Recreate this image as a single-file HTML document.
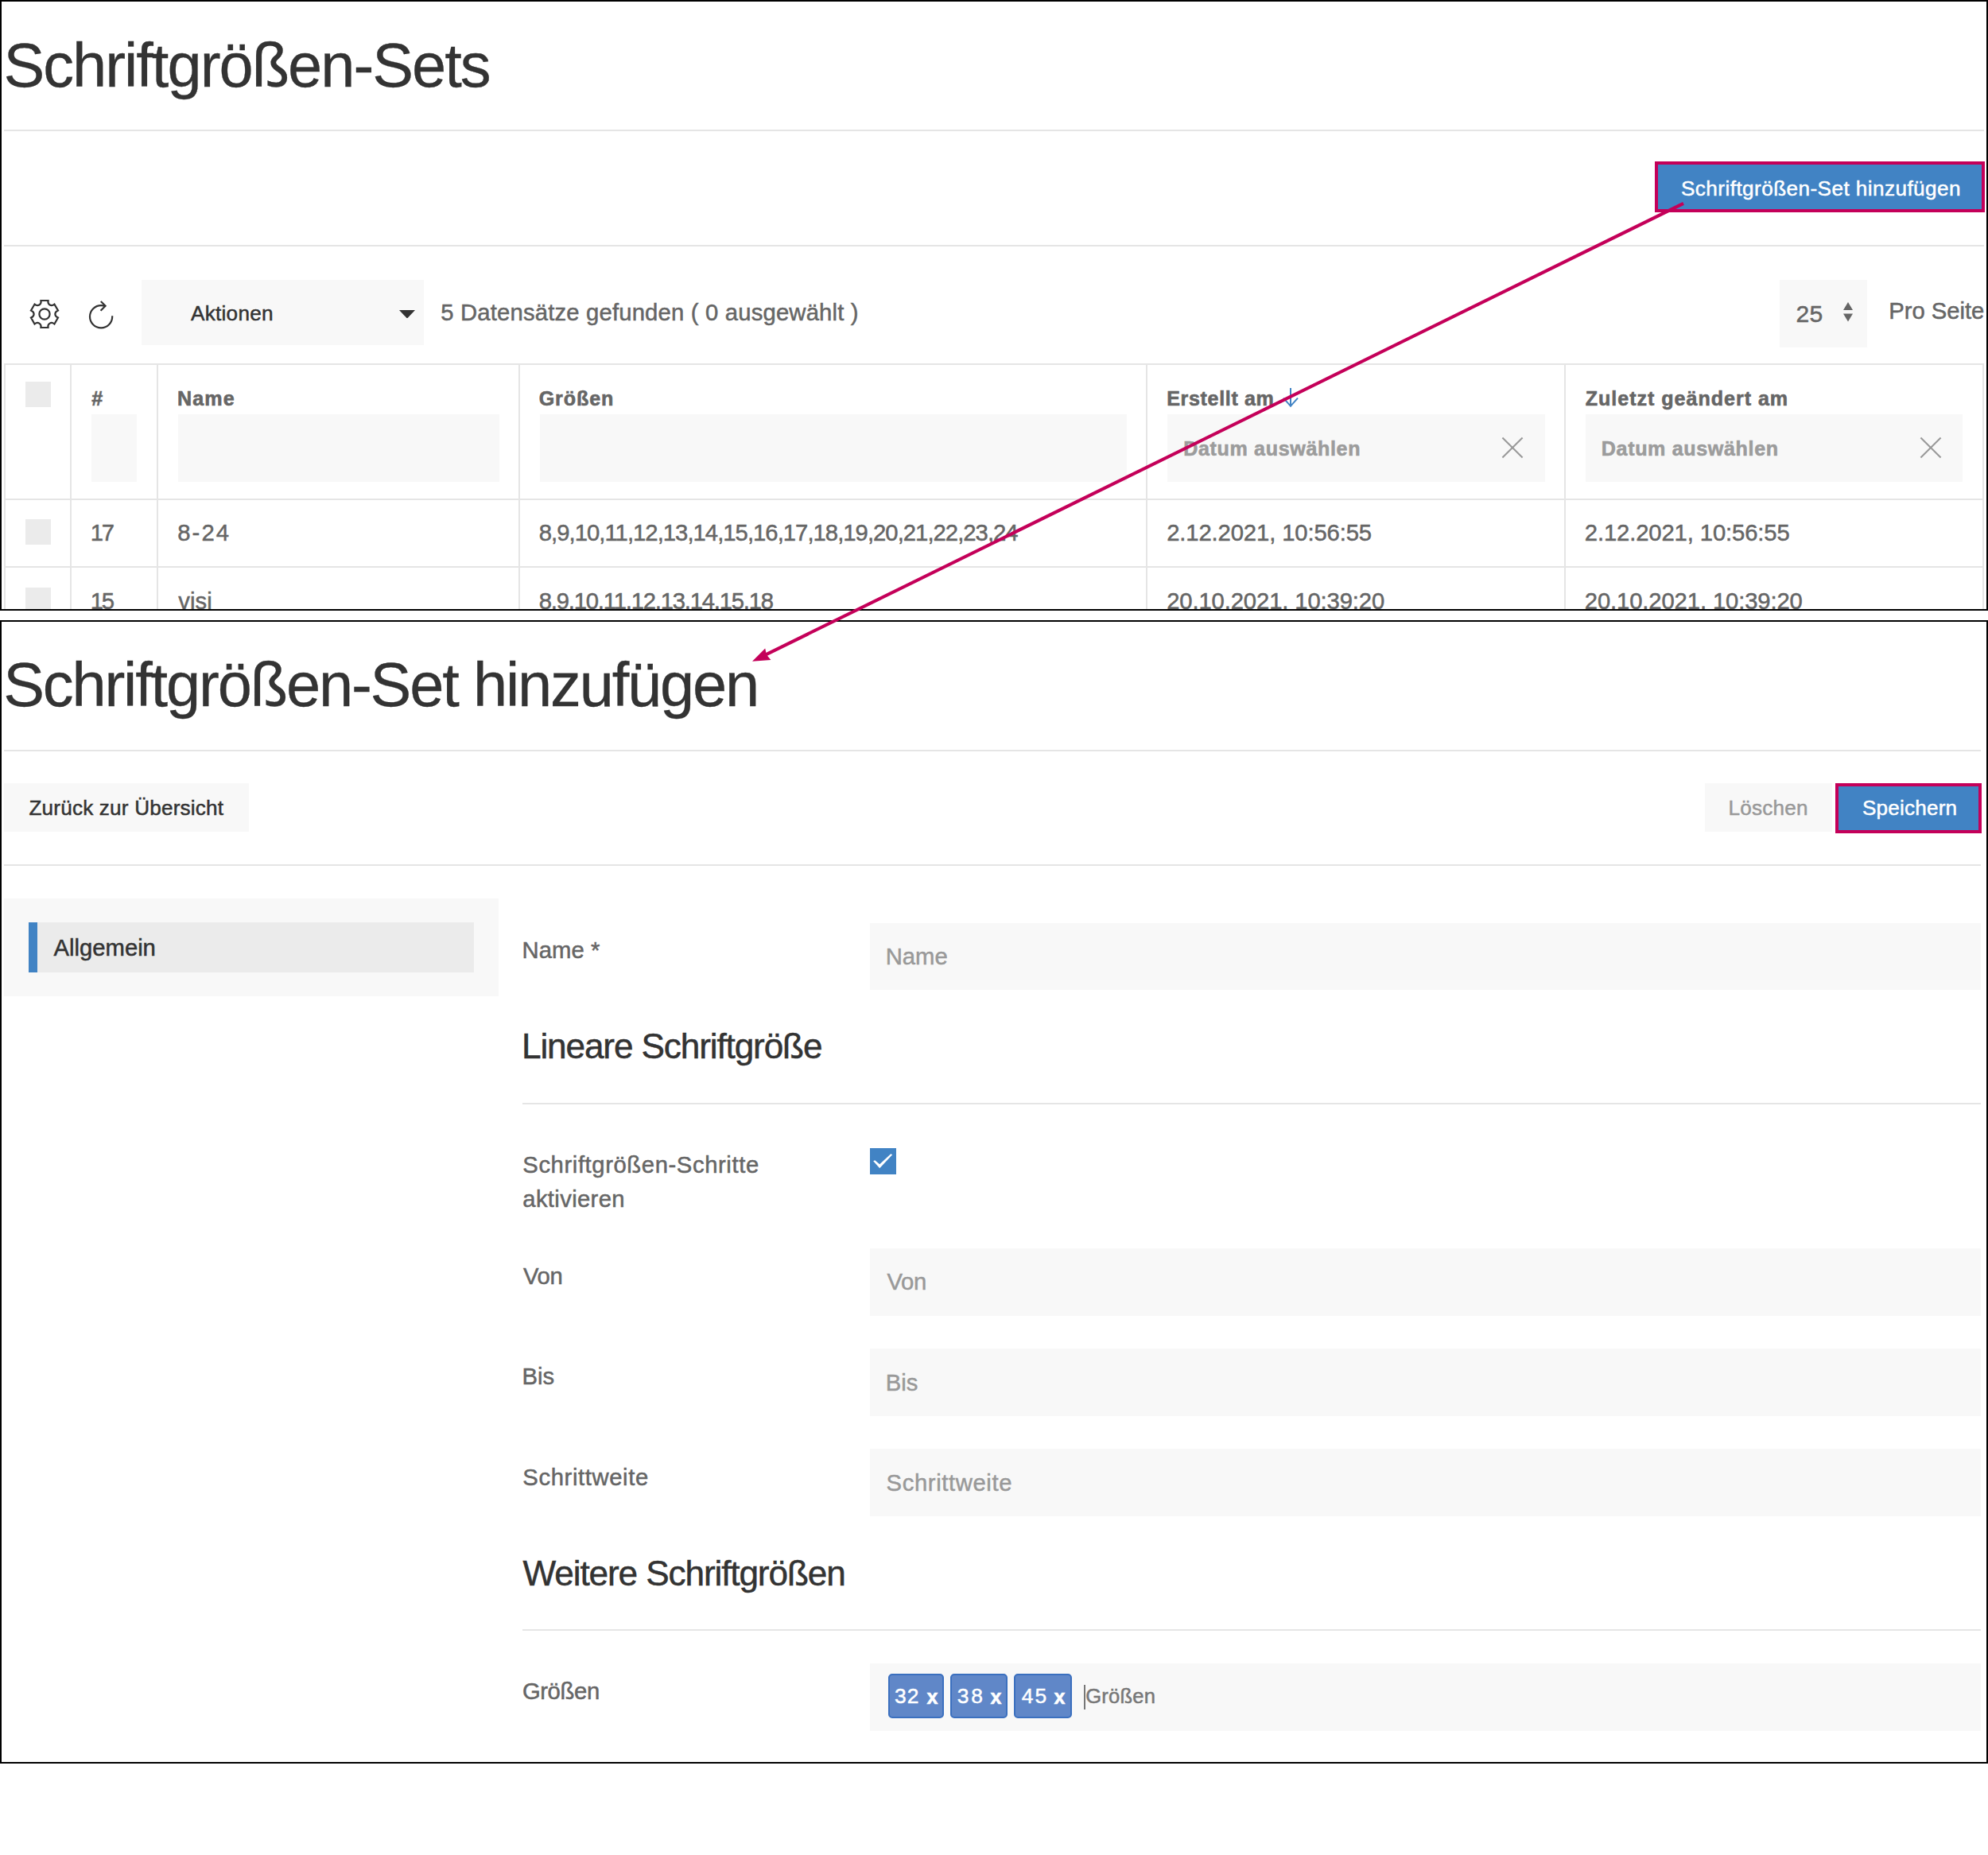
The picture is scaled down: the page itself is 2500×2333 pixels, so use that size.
<!DOCTYPE html>
<html lang="de"><head><meta charset="utf-8"><title>Schriftgrößen-Sets</title>
<style>
html,body{margin:0;padding:0;background:#fff}
body{width:2500px;height:2333px;position:relative;overflow:hidden;font-family:"Liberation Sans",sans-serif}
.frame{position:absolute;left:0;width:2500px;box-sizing:border-box;border:2px solid #000;overflow:hidden;background:#fff}
.inner{position:absolute;left:-2px;width:2500px}
.b{position:absolute;display:block}
.t{position:absolute;white-space:pre;line-height:1;-webkit-text-stroke:0.3px currentColor}
.tag{box-sizing:border-box;background:#6087c8;border:2px solid #3b70bf;border-radius:5px}
</style></head><body>
<section class="frame" style="top:0;height:768px"><div class="inner" style="top:-2px">
<div class="b" style="left:5px;top:163px;width:2490px;height:2px;background:#e5e5e5;"></div>
<div class="b" style="left:5px;top:307.5px;width:2490px;height:2px;background:#e5e5e5;"></div>
<div class="b" style="left:2081px;top:203px;width:415px;height:64px;background:#4183c4;box-sizing:border-box;border:4px solid #c40059;"></div>
<div class="b" style="left:178px;top:352px;width:355px;height:81.5px;background:#f8f8f8;"></div>
<div class="b" style="left:2238px;top:351.5px;width:110px;height:85px;background:#f8f8f8;"></div>
<div class="b" style="left:5.3px;top:457.3px;width:2px;height:320px;background:#e5e5e5;"></div>
<div class="b" style="left:88.4px;top:457.3px;width:2px;height:320px;background:#e5e5e5;"></div>
<div class="b" style="left:196.5px;top:457.3px;width:2px;height:320px;background:#e5e5e5;"></div>
<div class="b" style="left:652.2px;top:457.3px;width:2px;height:320px;background:#e5e5e5;"></div>
<div class="b" style="left:1441.4px;top:457.3px;width:2px;height:320px;background:#e5e5e5;"></div>
<div class="b" style="left:1967.3px;top:457.3px;width:2px;height:320px;background:#e5e5e5;"></div>
<div class="b" style="left:2493px;top:457.3px;width:2px;height:320px;background:#e5e5e5;"></div>
<div class="b" style="left:5.3px;top:457.3px;width:2489.7px;height:2px;background:#e5e5e5;"></div>
<div class="b" style="left:5.3px;top:626.5px;width:2489.7px;height:2px;background:#e5e5e5;"></div>
<div class="b" style="left:5.3px;top:711.7px;width:2489.7px;height:2px;background:#e5e5e5;"></div>
<div class="b" style="left:32px;top:480px;width:32px;height:32px;background:#ebebeb;"></div>
<div class="b" style="left:32px;top:653.2px;width:32px;height:32px;background:#ebebeb;"></div>
<div class="b" style="left:32px;top:738.6px;width:32px;height:32px;background:#ebebeb;"></div>
<div class="b" style="left:115.3px;top:520.5px;width:56.7px;height:85px;background:#f8f8f8;"></div>
<div class="b" style="left:223.5px;top:520.5px;width:404.1px;height:85px;background:#f8f8f8;"></div>
<div class="b" style="left:678.8px;top:520.5px;width:738.2px;height:85px;background:#f8f8f8;"></div>
<div class="b" style="left:1468.2px;top:520.5px;width:474.5px;height:85px;background:#f8f8f8;"></div>
<div class="b" style="left:1993.8px;top:520.5px;width:474.5px;height:85px;background:#f8f8f8;"></div>
<svg class="b" style="left:36px;top:375.3px" width="40" height="40" viewBox="0 0 20 20"><circle fill="none" stroke="#333" stroke-width="1.1" cx="9.997" cy="10" r="3.31"/><path fill="none" stroke="#333" stroke-width="1.1" d="M18.488,12.285 L16.205,16.237 C15.322,15.496 14.185,15.281 13.303,15.791 C12.428,16.289 12.047,17.373 12.246,18.5 L7.735,18.5 C7.938,17.374 7.553,16.299 6.684,15.791 C5.801,15.27 4.655,15.492 3.773,16.237 L1.5,12.285 C2.573,11.871 3.317,10.999 3.317,9.991 C3.305,8.98 2.573,8.121 1.5,7.716 L3.765,3.784 C4.645,4.516 5.794,4.738 6.687,4.232 C7.555,3.722 7.939,2.637 7.735,1.5 L12.263,1.5 C12.072,2.637 12.441,3.71 13.314,4.22 C14.206,4.73 15.343,4.516 16.225,3.794 L18.487,7.714 C17.404,8.117 16.661,8.988 16.67,10.009 C16.672,11.018 17.415,11.88 18.488,12.285 L18.488,12.285 Z"/></svg>
<svg class="b" style="left:107.4px;top:374.6px" width="40" height="40" viewBox="0 0 20 20"><path fill="none" stroke="#333" stroke-width="1.1" d="M17.08,11.15 C17.09,11.31 17.1,11.47 17.1,11.64 C17.1,15.53 13.94,18.69 10.05,18.69 C6.16,18.69 3,15.53 3,11.64 C3,7.75 6.16,4.59 10.05,4.59 C10.9,4.59 11.71,4.73 12.46,5.01"/><polyline fill="none" stroke="#333" stroke-width="1.1" points="9.9 2 12.79 4.89 9.79 7.9"/></svg>
<svg class="b" style="left:1881px;top:542.3px" width="42" height="42" viewBox="0 0 20 20"><path fill="none" stroke="#999" stroke-width="0.98" d="M16,16 L4,4"/><path fill="none" stroke="#999" stroke-width="0.98" d="M16,4 L4,16"/></svg>
<svg class="b" style="left:2406.6px;top:542.3px" width="42" height="42" viewBox="0 0 20 20"><path fill="none" stroke="#999" stroke-width="0.98" d="M16,16 L4,4"/><path fill="none" stroke="#999" stroke-width="0.98" d="M16,4 L4,16"/></svg>
<svg class="b" style="left:1601.9px;top:479.7px" width="40" height="40" viewBox="0 0 20 20"><polygon fill="#4183c4" points="10.5,16.08 5.63,10.66 6.37,10 10.5,14.58 14.63,10 15.37,10.66"/><line fill="none" stroke="#4183c4" x1="10.5" y1="4" x2="10.5" y2="15"/></svg>
<svg class="b" style="left:502px;top:389.6px" width="20" height="10.6" viewBox="0 0 20 11" preserveAspectRatio="none"><polygon fill="#333" points="0,0 20,0 10,11"/></svg>
<svg class="b" style="left:2317.8px;top:380px" width="12" height="25" viewBox="0 0 13 25" preserveAspectRatio="none"><polygon fill="#666" points="0,10 13,10 6.5,0"/><polygon fill="#666" points="0,14.5 13,14.5 6.5,24.5"/></svg>
<span class="t" style="left:4.4px;top:43.5px;font-size:77.64px;letter-spacing:-1.99px;color:#333;">Schriftgrößen-Sets</span>
<span class="t" style="left:2114.0px;top:224.2px;font-size:26.12px;letter-spacing:0.44px;color:#fff;-webkit-text-stroke-width:0.5px;">Schriftgrößen-Set hinzufügen</span>
<span class="t" style="left:240.0px;top:381.0px;font-size:26.12px;letter-spacing:0.27px;color:#333;-webkit-text-stroke-width:0.5px;">Aktionen</span>
<span class="t" style="left:554.2px;top:379.4px;font-size:29.26px;letter-spacing:0.18px;color:#666;-webkit-text-stroke-width:0.5px;">5 Datensätze gefunden ( 0 ausgewählt )</span>
<span class="t" style="left:2258.5px;top:379.5px;font-size:30.1px;letter-spacing:0.26px;color:#666;-webkit-text-stroke-width:0.5px;">25</span>
<span class="t" style="left:2375.3px;top:377.1px;font-size:29.26px;letter-spacing:-0.04px;color:#666;-webkit-text-stroke-width:0.5px;">Pro Seite</span>
<span class="t" style="left:115.3px;top:488.9px;font-size:25.08px;letter-spacing:1.7px;color:#666;font-weight:700;-webkit-text-stroke-width:0.6px;">#</span>
<span class="t" style="left:223.0px;top:488.9px;font-size:25.08px;letter-spacing:1.15px;color:#666;font-weight:700;-webkit-text-stroke-width:0.6px;">Name</span>
<span class="t" style="left:677.7px;top:488.9px;font-size:25.08px;letter-spacing:0.89px;color:#666;font-weight:700;-webkit-text-stroke-width:0.6px;">Größen</span>
<span class="t" style="left:1467.2px;top:488.9px;font-size:25.08px;letter-spacing:0.65px;color:#666;font-weight:700;-webkit-text-stroke-width:0.6px;">Erstellt am</span>
<span class="t" style="left:1993.8px;top:488.9px;font-size:25.08px;letter-spacing:0.97px;color:#666;font-weight:700;-webkit-text-stroke-width:0.6px;">Zuletzt geändert am</span>
<span class="t" style="left:1488.2px;top:552.0px;font-size:25.08px;letter-spacing:0.65px;color:#9c9c9c;font-weight:700;-webkit-text-stroke-width:0.6px;">Datum auswählen</span>
<span class="t" style="left:2013.8px;top:552.0px;font-size:25.08px;letter-spacing:0.65px;color:#9c9c9c;font-weight:700;-webkit-text-stroke-width:0.6px;">Datum auswählen</span>
<span class="t" style="left:113.7px;top:656.4px;font-size:29.26px;letter-spacing:-2.27px;color:#666;-webkit-text-stroke-width:0.5px;">17</span>
<span class="t" style="left:223.3px;top:656.4px;font-size:29.26px;letter-spacing:2.04px;color:#666;-webkit-text-stroke-width:0.5px;">8-24</span>
<span class="t" style="left:677.8px;top:656.4px;font-size:29.26px;letter-spacing:-0.97px;color:#666;-webkit-text-stroke-width:0.5px;">8,9,10,11,12,13,14,15,16,17,18,19,20,21,22,23,24</span>
<span class="t" style="left:1467.2px;top:656.4px;font-size:29.26px;letter-spacing:-0.13px;color:#666;-webkit-text-stroke-width:0.5px;">2.12.2021, 10:56:55</span>
<span class="t" style="left:1992.8px;top:656.4px;font-size:29.26px;letter-spacing:-0.13px;color:#666;-webkit-text-stroke-width:0.5px;">2.12.2021, 10:56:55</span>
<span class="t" style="left:113.7px;top:742.4px;font-size:29.26px;letter-spacing:-2.27px;color:#666;-webkit-text-stroke-width:0.5px;">15</span>
<span class="t" style="left:224.3px;top:742.4px;font-size:29.26px;letter-spacing:0.08px;color:#666;-webkit-text-stroke-width:0.5px;">visi</span>
<span class="t" style="left:677.8px;top:742.4px;font-size:29.26px;letter-spacing:-1.21px;color:#666;-webkit-text-stroke-width:0.5px;">8,9,10,11,12,13,14,15,18</span>
<span class="t" style="left:1467.2px;top:742.4px;font-size:29.26px;letter-spacing:-0.13px;color:#666;-webkit-text-stroke-width:0.5px;">20.10.2021, 10:39:20</span>
<span class="t" style="left:1992.8px;top:742.4px;font-size:29.26px;letter-spacing:-0.13px;color:#666;-webkit-text-stroke-width:0.5px;">20.10.2021, 10:39:20</span>
</div></section>
<section class="frame" style="top:780px;height:1438px"><div class="inner" style="top:-782px">
<div class="b" style="left:5px;top:942.5px;width:2486px;height:2px;background:#e5e5e5;"></div>
<div class="b" style="left:5px;top:1087px;width:2486px;height:2px;background:#e5e5e5;"></div>
<div class="b" style="left:5px;top:985.3px;width:308px;height:60.3px;background:#f8f8f8;"></div>
<div class="b" style="left:2144px;top:985.3px;width:160px;height:60.3px;background:#f8f8f8;"></div>
<div class="b" style="left:2308px;top:985.3px;width:184px;height:62.3px;background:#4183c4;box-sizing:border-box;border:4px solid #c40059;"></div>
<div class="b" style="left:5px;top:1130px;width:622px;height:123px;background:#f8f8f8;"></div>
<div class="b" style="left:35.6px;top:1160px;width:560.2px;height:63px;background:#ebebeb;box-sizing:border-box;border-left:11px solid #4183c4;"></div>
<div class="b" style="left:1094px;top:1160.5px;width:1397px;height:84.7px;background:#f8f8f8;"></div>
<div class="b" style="left:1094px;top:1570px;width:1397px;height:84.7px;background:#f8f8f8;"></div>
<div class="b" style="left:1094px;top:1696.3px;width:1397px;height:84.7px;background:#f8f8f8;"></div>
<div class="b" style="left:1094px;top:1822px;width:1397px;height:84.7px;background:#f8f8f8;"></div>
<div class="b" style="left:1094px;top:2092.3px;width:1397px;height:84.5px;background:#f8f8f8;"></div>
<div class="b" style="left:657px;top:1387.2px;width:1834px;height:2px;background:#e5e5e5;"></div>
<div class="b" style="left:657px;top:2049px;width:1834px;height:2px;background:#e5e5e5;"></div>
<div class="b" style="left:1094px;top:1444px;width:32.5px;height:32.5px;background:#4183c4;"></div>
<svg class="b" style="left:1094px;top:1444px" width="32.5" height="32.5" viewBox="0 0 32.5 32.5"><polygon fill="#fff" points="26.2,7.2 12.2,20.2 6.2,15.2 4.2,16.2 12.2,25.2 28.2,8.2"/></svg>
<div class="b tag" style="left:1116.8px;top:2105.2px;width:70px;height:55.6px"></div>
<div class="b tag" style="left:1195.1px;top:2105.2px;width:72px;height:55.6px"></div>
<div class="b tag" style="left:1275.2px;top:2105.2px;width:72.4px;height:55.6px"></div>
<div class="b" style="left:1363px;top:2119px;width:1.5px;height:30.5px;background:#777;"></div>
<span class="t" style="left:4.2px;top:823.2px;font-size:77.64px;letter-spacing:-2.17px;color:#333;">Schriftgrößen-Set hinzufügen</span>
<span class="t" style="left:36.4px;top:1002.5px;font-size:26.12px;letter-spacing:0.2px;color:#333;-webkit-text-stroke-width:0.5px;">Zurück zur Übersicht</span>
<span class="t" style="left:2173.5px;top:1002.7px;font-size:26.12px;letter-spacing:0.22px;color:#999;-webkit-text-stroke-width:0.5px;">Löschen</span>
<span class="t" style="left:2341.9px;top:1002.7px;font-size:26.12px;letter-spacing:0.21px;color:#fff;-webkit-text-stroke-width:0.5px;">Speichern</span>
<span class="t" style="left:67.6px;top:1178.1px;font-size:29.26px;letter-spacing:-0.02px;color:#333;-webkit-text-stroke-width:0.5px;">Allgemein</span>
<span class="t" style="left:656.5px;top:1180.8px;font-size:29.26px;letter-spacing:0.07px;color:#666;-webkit-text-stroke-width:0.5px;">Name *</span>
<span class="t" style="left:1113.8px;top:1189.0px;font-size:29.26px;letter-spacing:-0.05px;color:#999;-webkit-text-stroke-width:0.5px;">Name</span>
<span class="t" style="left:656.0px;top:1294.2px;font-size:44.2px;letter-spacing:-1.15px;color:#333;-webkit-text-stroke-width:0.5px;">Lineare Schriftgröße</span>
<span class="t" style="left:657.3px;top:1450.9px;font-size:29.26px;letter-spacing:0.59px;color:#666;-webkit-text-stroke-width:0.5px;">Schriftgrößen-Schritte</span>
<span class="t" style="left:657.3px;top:1493.9px;font-size:29.26px;letter-spacing:0.34px;color:#666;-webkit-text-stroke-width:0.5px;">aktivieren</span>
<span class="t" style="left:658.0px;top:1590.7px;font-size:29.26px;letter-spacing:-0.28px;color:#666;-webkit-text-stroke-width:0.5px;">Von</span>
<span class="t" style="left:1115.4px;top:1598.4px;font-size:29.26px;letter-spacing:-0.28px;color:#999;-webkit-text-stroke-width:0.5px;">Von</span>
<span class="t" style="left:656.5px;top:1717.1px;font-size:29.26px;letter-spacing:-0.0px;color:#666;-webkit-text-stroke-width:0.5px;">Bis</span>
<span class="t" style="left:1113.8px;top:1724.6px;font-size:29.26px;letter-spacing:-0.0px;color:#999;-webkit-text-stroke-width:0.5px;">Bis</span>
<span class="t" style="left:657.3px;top:1843.6px;font-size:29.26px;letter-spacing:0.61px;color:#666;-webkit-text-stroke-width:0.5px;">Schrittweite</span>
<span class="t" style="left:1114.6px;top:1850.7px;font-size:29.26px;letter-spacing:0.61px;color:#999;-webkit-text-stroke-width:0.5px;">Schrittweite</span>
<span class="t" style="left:657.6px;top:1956.5px;font-size:44.2px;letter-spacing:-1.14px;color:#333;-webkit-text-stroke-width:0.5px;">Weitere Schriftgrößen</span>
<span class="t" style="left:656.9px;top:2113.2px;font-size:29.26px;letter-spacing:-0.38px;color:#666;-webkit-text-stroke-width:0.5px;">Größen</span>
<span class="t" style="left:1365.2px;top:2121.4px;font-size:25.6px;letter-spacing:0.19px;color:#777;-webkit-text-stroke-width:0.5px;">Größen</span>
<span class="t" style="left:1124.9px;top:2120.4px;font-size:26.4px;letter-spacing:1.22px;color:#fff;-webkit-text-stroke-width:0.5px;">32</span>
<span class="t" style="left:1165.5px;top:2121.5px;font-size:25.08px;letter-spacing:-0.9px;color:#fff;font-weight:700;-webkit-text-stroke-width:0.6px;">x</span>
<span class="t" style="left:1203.7px;top:2120.4px;font-size:26.4px;letter-spacing:2.92px;color:#fff;-webkit-text-stroke-width:0.5px;">38</span>
<span class="t" style="left:1245.4px;top:2121.5px;font-size:25.08px;letter-spacing:-0.7px;color:#fff;font-weight:700;-webkit-text-stroke-width:0.6px;">x</span>
<span class="t" style="left:1284.8px;top:2120.4px;font-size:26.4px;letter-spacing:1.92px;color:#fff;-webkit-text-stroke-width:0.5px;">45</span>
<span class="t" style="left:1325.5px;top:2121.5px;font-size:25.08px;letter-spacing:-1.0px;color:#fff;font-weight:700;-webkit-text-stroke-width:0.6px;">x</span>
</div></section>
<svg class="b" style="left:0;top:0;z-index:5" width="2500" height="2333" viewBox="0 0 2500 2333">
<line x1="2117" y1="255.8" x2="962" y2="823.9" stroke="#c40059" stroke-width="4.1"/>
<polygon fill="#c40059" points="946,831.7 962.2,815.4 964,823.4 969.4,830"/></svg>
</body></html>
